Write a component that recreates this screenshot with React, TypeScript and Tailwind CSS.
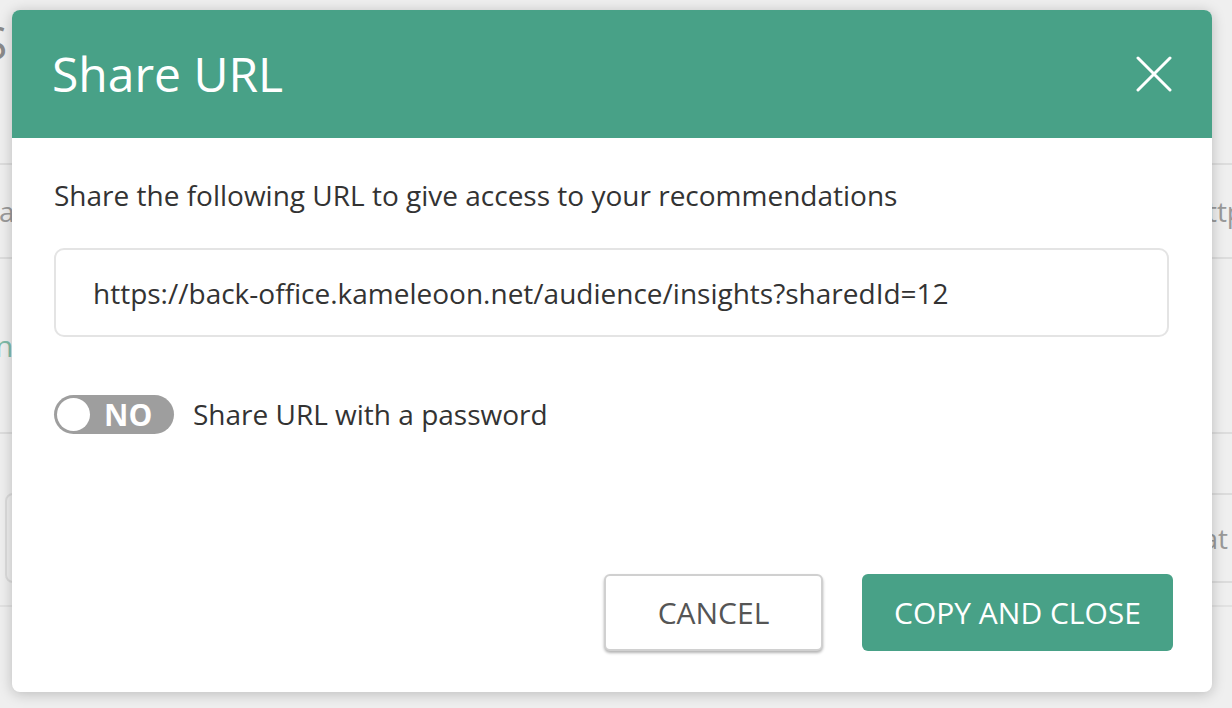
import React from 'react';

const FONT = { fontFamily: '"Open Sans", "Liberation Sans", sans-serif' };

function CloseIcon() {
  return (
    <svg width="36" height="36" viewBox="0 0 36 36" fill="none">
      <path
        d="M2 2l32 32M34 2L2 34"
        stroke="white"
        strokeWidth="3"
        strokeLinecap="round"
      />
    </svg>
  );
}

function PageBehind() {
  return (
    <div className="flex flex-col text-[28px] text-[#9a9a9a]">
      <div className="h-[163px] pt-[14px] -ml-[18px] text-[46px] leading-[56px] text-[#8a8a8a] whitespace-nowrap">
        S
      </div>
      <div className="h-[94px] border-t-2 border-[#dddddd] flex items-center justify-between whitespace-nowrap">
        <span className="-ml-[1px]">a</span>
        <span className="-mr-[12px]">http</span>
      </div>
      <div className="h-[175px] border-t-2 border-[#dddddd] flex items-center whitespace-nowrap">
        <span className="-ml-[5px] text-[30px] text-[#7fbca8]">ny</span>
      </div>
      <div className="border-t-2 border-[#dddddd] pt-[59px]">
        <div className="ml-[5px] -mr-[10px] h-[90px] border-2 border-[#dcdcdc] rounded-lg flex items-center justify-end pr-[12px]">
          <span>at</span>
        </div>
        <div className="mt-[22px] border-t-2 border-[#e2e2e2]" />
      </div>
    </div>
  );
}

export default function App() {
  return (
    <div
      className="relative w-[1232px] h-[708px] overflow-hidden bg-[#efefef]"
      style={FONT}
    >
      <PageBehind />

      {/* modal */}
      <div className="absolute left-[12px] top-[10px] w-[1200px] h-[682px] bg-white rounded-[8px] shadow-[0_2px_14px_rgba(0,0,0,0.22)] flex flex-col overflow-hidden">
        <div className="h-[128px] bg-[#48a187] flex items-center justify-between pl-[40px] pr-[40px]">
          <h1 className="text-[48px] leading-none text-white">Share URL</h1>
          <button className="w-[36px] h-[36px] flex items-center justify-center">
            <CloseIcon />
          </button>
        </div>

        <div className="flex-1 flex flex-col pl-[42px] pr-[39px] pt-[40px] pb-[41px]">
          <p className="text-[28px] leading-[34px] text-[#333333]">
            Share the following URL to give access to your recommendations
          </p>

          <div className="mt-[36px] w-[1115px] h-[89px] border-2 border-[#e4e4e4] rounded-[10px] flex items-center pl-[37px] text-[28px] text-[#333333]">
            https://back-office.kameleoon.net/audience/insights?sharedId=12
          </div>

          <div className="mt-[58px] flex items-center gap-[19px]">
            <div className="w-[120px] h-[39px] rounded-full bg-[#9e9e9e] flex items-center pl-[3px]">
              <span className="w-[33px] h-[33px] rounded-full bg-white" />
              <span className="ml-[14px] text-[30px] leading-none font-bold text-white">
                NO
              </span>
            </div>
            <span className="text-[28px] leading-[39px] text-[#333333]">
              Share URL with a password
            </span>
          </div>

          <div className="mt-auto flex justify-end gap-[39px]">
            <button className="w-[219px] h-[77px] border-2 border-[#d0d0d0] rounded-[6px] bg-white shadow-[0_2px_3px_rgba(0,0,0,0.3)] text-[30px] text-[#555555]">
              CANCEL
            </button>
            <button className="w-[311px] h-[77px] rounded-[6px] bg-[#48a187] text-[30px] text-white">
              COPY AND CLOSE
            </button>
          </div>
        </div>
      </div>
    </div>
  );
}
